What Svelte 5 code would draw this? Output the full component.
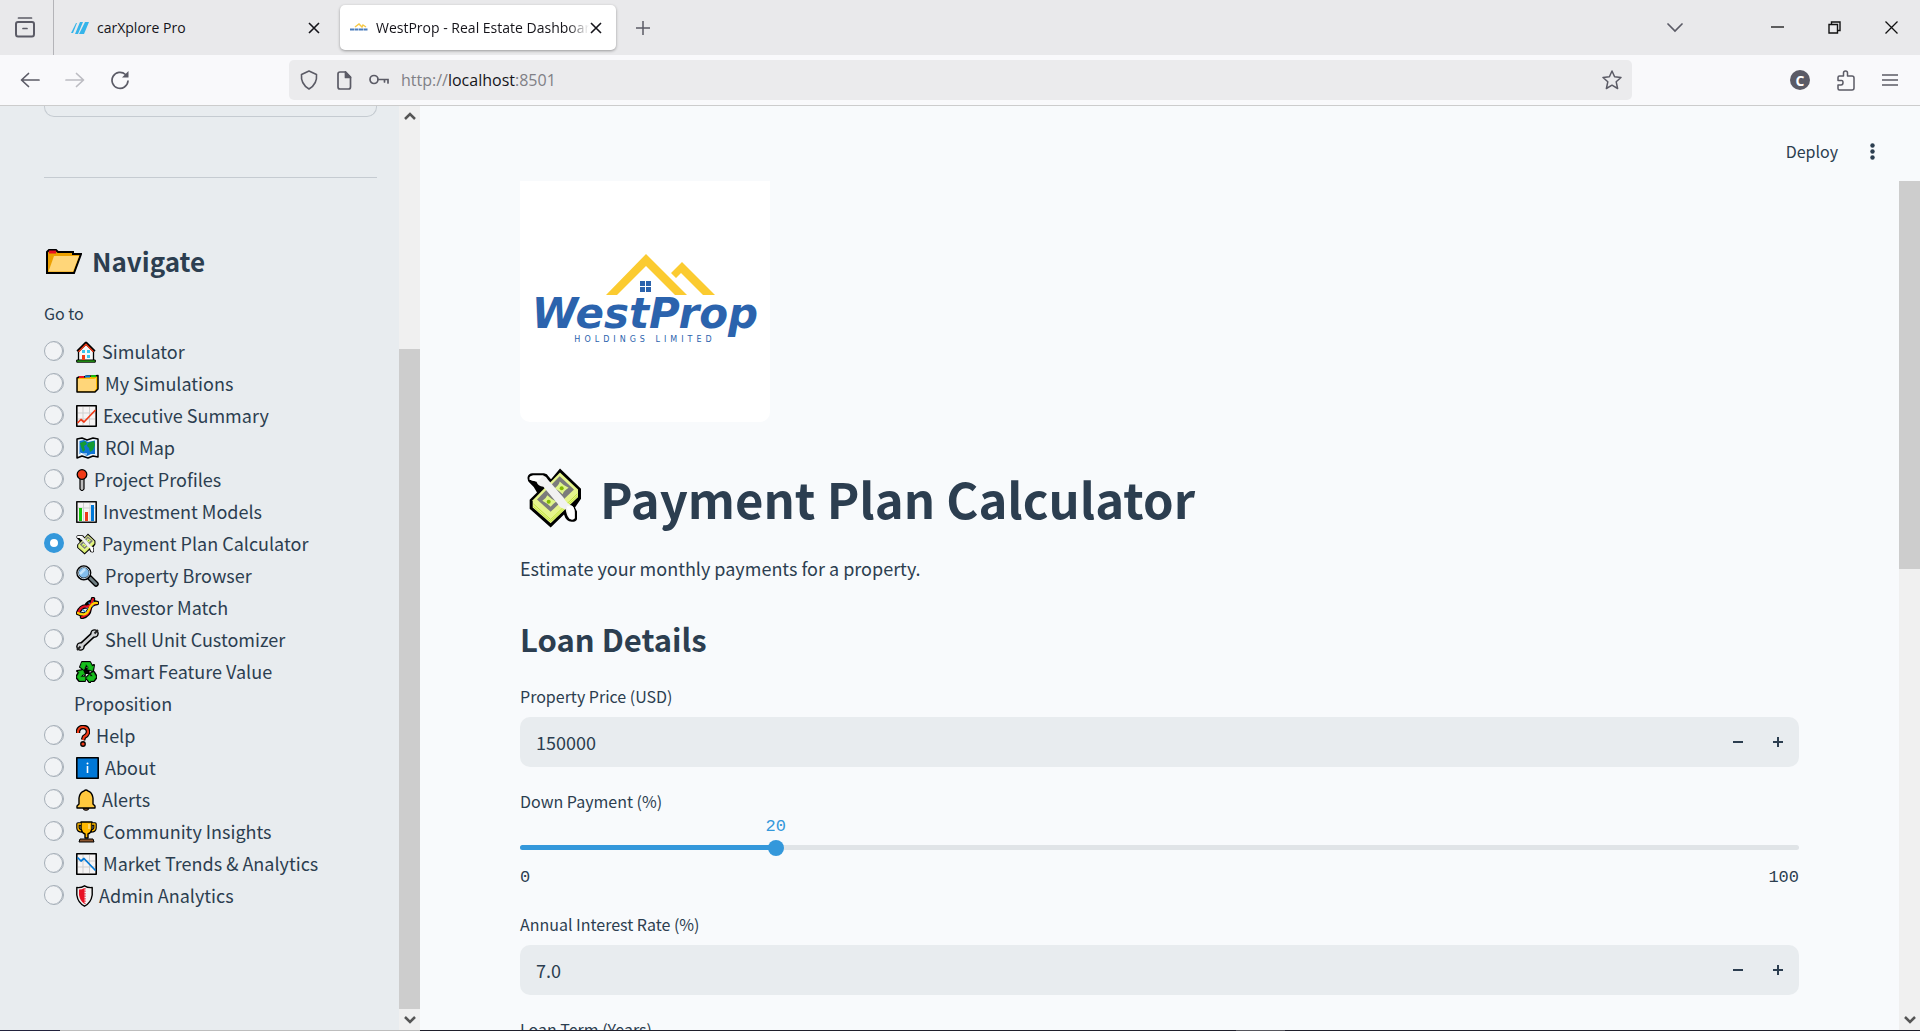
<script>
  const pages = [
    { id: 'house', w: 20, label: 'Simulator' },
    { id: 'dividers', w: 23, label: 'My Simulations' },
    { id: 'chartUp', w: 21, label: 'Executive Summary' },
    { id: 'map', w: 23, label: 'ROI Map' },
    { id: 'pin', w: 12, label: 'Project Profiles' },
    { id: 'bars', w: 21, label: 'Investment Models' },
    { id: 'money', w: 20, label: 'Payment Plan Calculator' },
    { id: 'search', w: 23, label: 'Property Browser' },
    { id: 'dna', w: 23, label: 'Investor Match' },
    { id: 'wrench', w: 23, label: 'Shell Unit Customizer' },
    { id: 'recycle', w: 21, label: 'Smart Feature Value Proposition' },
    { id: 'question', w: 14, label: 'Help' },
    { id: 'info', w: 23, label: 'About' },
    { id: 'bell', w: 20, label: 'Alerts' },
    { id: 'trophy', w: 21, label: 'Community Insights' },
    { id: 'chartDown', w: 21, label: 'Market Trends & Analytics' },
    { id: 'shield', w: 17, label: 'Admin Analytics' }
  ];
  let page = $state('money');
  let price = $state('150000');
  let rate = $state('7.0');
  let down = $state(20);
  const step = (value, by, digits) => (Number(value) + by).toFixed(digits);
</script>

{#snippet moneyArt()}
  <path d="M23 56Q26 45 37 45H72Q82 46 86 55L93 63L120 31L183 92V122L165 148L171 160V183Q167 192 155 191Q138 190 132 169L92 208L29 152V125L51 103Q43 85 28 73Q21 66 23 56Z" fill="#000" />
  <path d="M120 43L174 94V117L92 195L38 148V126Z" fill="#e6f58c" />
  <path d="M40 137L92 184L172 107M40 145L92 190L173 113" fill="none" stroke="#c3e43c" stroke-width="3" />
  <path d="M119 54L162 94L92 161L51 124Z" fill="#7c7c7c" />
  <path d="M119 70Q128 80 146 89Q132 97 128 108Q118 98 104 90Q118 80 119 70ZM82 111Q92 121 109 130Q99 137 92 146Q82 136 67 128Q78 121 82 111Z" fill="#dff58a" />
  <path d="M29 57Q32 52 40 52H70Q79 54 84 65L131 119Q139 136 156 143Q164 149 164 163V180Q158 187 148 181Q140 174 137 153Q120 151 113 137L70 86Q54 84 49 70Q40 69 29 65Z" fill="#f1f1f1" />
  <path d="M29 57Q32 52 40 52H70L58 65L49 70Q40 69 29 65ZM140 145L156 143Q164 149 164 163V180Q158 187 148 181Z" fill="#fff" />
  <circle cx="125" cy="90" r="6" fill="#82b900" /><circle cx="86" cy="131" r="6" fill="#82b900" />
{/snippet}

{#snippet emoji(id, w)}
  {#if id === 'money'}
    <svg class="emoji" width={w} height="22" viewBox="21 27 165 185" aria-hidden="true">{@render moneyArt()}</svg>
  {:else}
    <svg class="emoji" width={w} height="22" viewBox="0 0 {w} 22" stroke-linejoin="round" aria-hidden="true">
      {#if id === 'house'}
        <path d="M2.500 9V20H17.500V9L10 3Z" fill="#f7f7f7" stroke="#000" stroke-width="1.300" />
        <path d="M.7 19H19.300V21.200H.7Z" fill="#2cc11b" stroke="#000" />
        <path d="M1.500 10.500L10 2L18.500 10.500" fill="none" stroke="#000" stroke-width="3" />
        <path d="M2.500 10.800L10 3.300L17.500 10.800" fill="none" stroke="#f03a17" stroke-width="1.500" />
        <path d="M6 9h3v3H6zM11 9h3v3h-3zM11 14h3v3h-3z" fill="#37c5ee" /><path d="M6 14h3v5H6z" fill="#f03a17" />
      {:else if id === 'dividers'}
        <path d="M1 5L3 4H8L11 3H18L22 2.500V16L19 19H1Z" fill="#ffb900" stroke="#000" stroke-width="1.500" />
        <path d="M3 4H8" stroke="#e81123" stroke-width="2" /><path d="M9 3.500H14" stroke="#0078d7" stroke-width="2" /><path d="M15 3.200H20" stroke="#16c60c" stroke-width="2" />
        <path d="M2 6H18L20 5V16L18 18H2Z" fill="#ffd679" />
      {:else if id === 'chartUp' || id === 'chartDown'}
        <path d="M.8.800H20.200V21.200H.8Z" fill="#f6f4f4" stroke="#000" stroke-width="1.600" />
        <path d="M7 2V20M13.500 2V20M2 8H19M2 14H19" stroke="#cfcfcf" />
        {#if id === 'chartUp'}
          <path d="M1.500 18L5 14.500L8 17L19.500 5" fill="none" stroke="#f03a17" stroke-width="1.700" />
        {:else}
          <path d="M1.500 4.500L5 8L8 5.500L19.500 17.500" fill="none" stroke="#0078d7" stroke-width="1.700" />
        {/if}
      {:else if id === 'map'}
        <path d="M1 2L6 1L11 3L17 1L22 2V20L17 19L12 21L6 19L1 21Z" fill="#eaf3fa" stroke="#000" stroke-width="1.500" />
        <path d="M3.500 4L8 3L12 5L19 3.500V17L15 17L11 19L7 17L3.500 17Z" fill="#0f75d4" />
        <path d="M4 6L9 4L11 7L8 9L9 13L7 15L5 10ZM12 6L18 4L19 8L17 13L14 15L13 11L11 9Z" fill="#159b35" />
        <path d="M4 16L7 17L11 17" fill="none" stroke="#fff" />
      {:else if id === 'pin'}
        <path d="M4 9H8V20Q6 23 4 20Z" fill="#bdbdbd" stroke="#000" stroke-width="1.200" />
        <circle cx="6" cy="5.500" r="4.800" fill="#f03a17" stroke="#000" stroke-width="1.300" />
      {:else if id === 'bars'}
        <path d="M.8.800H20.200V21.200H.8Z" fill="#f6f4f4" stroke="#111" stroke-width="1.600" />
        <path d="M7.500 2V20M14 2V20M2 7H19" stroke="#cfcfcf" />
        <path d="M3 7h3v13H3z" fill="#16c60c" /><path d="M9 11h3v9H9z" fill="#f03a17" /><path d="M15 4h3v16h-3z" fill="#0078d7" />
      {:else if id === 'search'}
        <path d="M13 12L20 19" stroke="#000" stroke-width="5.500" stroke-linecap="round" />
        <path d="M14 13L20 19" stroke="#6f7e82" stroke-width="2.800" stroke-linecap="round" />
        <circle cx="7.800" cy="7.800" r="6.300" fill="#83beec" stroke="#000" stroke-width="2.600" /><circle cx="7.800" cy="7.800" r="5.800" fill="none" stroke="#c8d8e3" />
        <path d="M4 9L9 4" stroke="#c4e4fa" stroke-width="2.500" />
      {:else if id === 'dna'}
        <g fill="none" stroke-linecap="round">
          <path d="M2 16Q5 9 10 9.500T17 2M6 20Q13 18 13.500 12.500T21 6M2 16Q10 20 13.500 12.500M10 9.500Q13 3 21 6" stroke="#000" stroke-width="4.500" />
          <path d="M5 16L8 18M7 13L11 16M13 6L17 9M16 4L19 6M10 10L13 12" stroke="#2f8fe0" stroke-width="1.500" />
          <path d="M6 20Q13 18 13.500 12.500T21 6M2 16Q5 9 10 9.500T17 2" stroke="#e81123" stroke-width="2.200" />
          <path d="M2 16Q10 20 13 12.500T21 6" stroke="#ffd000" stroke-width="2.200" />
        </g>
      {:else if id === 'wrench'}
        <path d="M4.500 17.500L18.500 4.500" stroke="#000" stroke-width="6" /><circle cx="4.500" cy="17.500" r="4.300" fill="#000" /><circle cx="18.500" cy="4.500" r="4.300" fill="#000" />
        <path d="M4.500 17.500L18.500 4.500" stroke="#cfd1d3" stroke-width="3" /><circle cx="4.500" cy="17.500" r="2.900" fill="#cfd1d3" /><circle cx="18.500" cy="4.500" r="2.900" fill="#cfd1d3" />
        <path d="M1 21L4.500 17.500M18.500 4.500L22 1" stroke="#222" stroke-width="1.800" />
      {:else if id === 'recycle'}
        <path d="M6 1H14L16 5L18 4L17 10L11 8L13 7L11 4L8 9L4 6ZM18 11L21 16L18 20H14V22L10 17L14 13V15H17L15 12ZM1 10L7 9L9 14L7 13L5 16H9V20H3L0 16L3 11Z" fill="#000" stroke="#000" stroke-width="2" />
        <path d="M8 7L13 7L14 13L7 13Z" fill="#000" />
        <path d="M6 1.500H14L16 5.500L17.500 5L16.500 9.500L11.500 8L13 7L10 3L8 8.500L4.500 6ZM17.500 11.500L20 16L17.500 19.500H14V21L10.500 17L14 13.500V15.500H17L15 12.500ZM2 10.500L7 9.500L8.500 13.500L7 13L4 16H9V19.500H3.500L1 16L3.500 11.500Z" fill="#16c01c" stroke="#16b01c" stroke-width=".8" />
      {:else if id === 'question'}
        <path d="M2 8V6Q3 2 7 2Q12 2 12 7Q12 10 8 12L7 15" fill="none" stroke="#000" stroke-width="4.500" /><circle cx="7" cy="19" r="2.900" fill="#000" />
        <path d="M2 8V6Q3 2 7 2Q12 2 12 7Q12 10 8 12L7 15" fill="none" stroke="#f03a17" stroke-width="2.200" /><circle cx="7" cy="19" r="1.600" fill="#f03a17" />
      {:else if id === 'info'}
        <path d="M.8.800H22.200V21.200H.8Z" fill="#0078d7" stroke="#000" stroke-width="1.600" />
        <path d="M11.500 9V16" stroke="#fff" stroke-width="1.600" /><circle cx="11.500" cy="6.500" r="1" fill="#fff" />
      {:else if id === 'bell'}
        <path d="M7 19H13Q13 21.300 10 21.300T7 19Z" fill="#8e562e" stroke="#000" />
        <path d="M1 19V17L3 15V9Q4 3 8 2Q10 0 12 2Q16 3 17 9V15L19 17V19Z" fill="#ffc83d" stroke="#000" stroke-width="1.400" />
      {:else if id === 'trophy'}
        <path d="M5 3H2V7Q2 10 6 10M16 3H19V7Q19 10 15 10" fill="none" stroke="#000" stroke-width="3.600" />
        <path d="M5 1H16V8Q15 12 12 13V17H9V13Q6 12 5 8Z" fill="#ffb900" stroke="#000" stroke-width="1.400" />
        <path d="M5 3H2V7Q2 9 5 10M16 3H19V7Q19 9 16 10" fill="none" stroke="#ffb900" stroke-width="1.300" />
        <path d="M4 18H17L18 21H3Z" fill="#8e562e" stroke="#000" /><path d="M13 3V8" stroke="#ffe08a" stroke-width="1.500" />
      {:else}
        <path d="M8.500.800Q12 3 16.200 2.500V10Q15 18 8.500 21.200Q2 18 .8 10V2.500Q5 3 8.500.800Z" fill="#f2f2f2" stroke="#000" stroke-width="1.400" />
        <path d="M8.500 3Q6 4.500 3 4.500V10Q4 16 8.500 19Z" fill="#e81123" /><path d="M9 3V19" stroke="#e81123" stroke-dasharray="1.500 1" />
      {/if}
    </svg>
  {/if}
{/snippet}

{#snippet arrow(up)}
  <button class="arrow" aria-label={up ? 'Scroll up' : 'Scroll down'}>
    <svg width="12" height="10" viewBox="0 0 12 10" fill="none" stroke="#555" stroke-width="2.500">
      <path d={up ? 'M1 7L6 2L11 7' : 'M1 2L6 7L11 2'} />
    </svg>
  </button>
{/snippet}

{#snippet steppers(lower, raise)}
  <button aria-label="Decrease" onclick={lower}><svg width="10" height="10" viewBox="0 0 10 10"><path d="M0 5H10" stroke="#2c3e50" stroke-width="2" /></svg></button>
  <button aria-label="Increase" onclick={raise}><svg width="10" height="10" viewBox="0 0 10 10"><path d="M0 5H10M5 0V10" stroke="#2c3e50" stroke-width="2" /></svg></button>
{/snippet}

<div class="window">
  <header class="tabs">
    <button class="recent" aria-label="Recent browsing">
      <svg width="20" height="21" viewBox="0 0 20 21" fill="none" stroke="#5b5b66" stroke-width="1.700" stroke-linecap="round" stroke-linejoin="round">
        <path d="M3.500 1H16.500" /><path d="M3 5H17Q19 5 19 7V17Q19 19.500 17 19.500H3Q1 19.500 1 17V7Q1 5 3 5Z" stroke-width="2" /><path d="M8 11.500H12" />
      </svg>
    </button>
    <div class="tab">
      <svg class="fav" width="18" height="12" viewBox="0 0 18 12" fill="#35b4ea"><path d="M5 1H6L2 11H0ZM9 0H12L7 12H4ZM14 0H18L13 12H8Z" /></svg>
      <span>carXplore Pro</span>
      <button aria-label="Close tab"><svg width="12" height="12" viewBox="0 0 12 12"><path d="M1 1L11 11M11 1L1 11" stroke="#15141a" stroke-width="1.600" /></svg></button>
    </div>
    <div class="tab active">
      <svg class="fav" width="18" height="9" viewBox="0 0 18 9" fill="none"><path d="M5 4L9 1L12 4L13 2L16 4" stroke="#f6c844" stroke-width="1.400" /><path d="M0 6.500H18" stroke="#4a7dbd" stroke-width="2" stroke-dasharray="4 .500" /></svg>
      <span>WestProp - Real Estate Dashboard</span>
      <button aria-label="Close tab"><svg width="12" height="12" viewBox="0 0 12 12"><path d="M1 1L11 11M11 1L1 11" stroke="#15141a" stroke-width="1.600" /></svg></button>
    </div>
    <button class="plus" aria-label="New tab"><svg width="16" height="16" viewBox="0 0 16 16"><path d="M1 8H15M8 1V15" stroke="#5b5b66" stroke-width="1.500" /></svg></button>
    <div class="winctl">
      <button aria-label="List all tabs"><svg width="16" height="10" viewBox="0 0 16 10" fill="none"><path d="M1 1L8 8L15 1" stroke="#5b5b66" stroke-width="1.700" stroke-linecap="round" /></svg></button>
      <button aria-label="Minimize"><svg width="13" height="13" viewBox="0 0 13 13"><path d="M0 6H13" stroke="#111" stroke-width="1.300" /></svg></button>
      <button aria-label="Restore"><svg width="13" height="13" viewBox="0 0 13 13" fill="none" stroke="#111" stroke-width="1.400"><path d="M1 3.500H9.500V12H1ZM3.500 3V1H12V9.500H10" /></svg></button>
      <button aria-label="Close"><svg width="13" height="13" viewBox="0 0 13 13"><path d="M.500.500L12.500 12.500M12.500.500L.5 12.500" stroke="#111" stroke-width="1.300" /></svg></button>
    </div>
  </header>

  <nav class="toolbar">
    <div class="history">
      <button aria-label="Back"><svg width="20" height="16" viewBox="0 0 20 16" fill="none" stroke="#5b5b66" stroke-width="1.700" stroke-linecap="round" stroke-linejoin="round"><path d="M19 8H2M8.500 1.500L1.500 8L8.500 14.500" /></svg></button>
      <button aria-label="Forward"><svg width="20" height="16" viewBox="0 0 20 16" fill="none" stroke="#bcbcc2" stroke-width="1.700" stroke-linecap="round" stroke-linejoin="round"><path d="M1 8H18M11.500 1.500L18.500 8L11.500 14.500" /></svg></button>
      <button aria-label="Reload"><svg width="20" height="20" viewBox="0 0 20 20" fill="none"><path d="M18 11A8 8 0 1 1 15.500 4.500" stroke="#5b5b66" stroke-width="1.700" stroke-linecap="round" /><path d="M18.500 1V7.500H12Z" fill="#5b5b66" /></svg></button>
    </div>
    <div class="address">
      <svg width="20" height="20" viewBox="0 0 20 20" fill="none" stroke="#5b5b66" stroke-width="1.600" stroke-linejoin="round"><path d="M10 1L17.500 4.500Q18.500 14 10 19Q1.500 14 2.500 4.500Z" /></svg>
      <svg width="16" height="19" viewBox="0 0 16 19" fill="none" stroke="#5b5b66" stroke-width="1.700" stroke-linejoin="round"><path d="M4 1H9.500L14.500 6V16Q14.500 18 12.500 18H4Q2 18 2 16V3Q2 1 4 1Z" /><path d="M9.500 1V6.500H14.500Z" fill="#5b5b66" /></svg>
      <svg width="20" height="12" viewBox="0 0 20 12" fill="none" stroke="#5b5b66" stroke-width="1.700" stroke-linecap="round"><circle cx="5" cy="5.500" r="4" /><path d="M9 5.500H19V9M15.500 5.500V8" /></svg>
      <a href="http://localhost:8501">http://<b>localhost</b>:8501</a>
      <button aria-label="Bookmark this page"><svg width="20" height="20" viewBox="0 0 20 20" fill="none" stroke="#5b5b66" stroke-width="1.500" stroke-linejoin="round"><path d="M10 1L12.600 6.800L19 7.500L14.200 11.800L15.600 18.500L10 15.200L4.400 18.500L5.800 11.800L1 7.500L7.400 6.800Z" /></svg></button>
    </div>
    <div class="extras">
      <button class="account" aria-label="Account">C</button>
      <button aria-label="Extensions"><svg width="18" height="21" viewBox="0 0 18 21" fill="none" stroke="#5b5b66" stroke-width="1.500" stroke-linejoin="round"><path d="M2.500 6H6.500V3Q6.500 1 8.500 1T10.500 3V6H15Q17 6 17 8V18Q17 20 15 20H2.500Q1 20 1 18.500V15H4Q6 15 6 12.500T4 10.500H1V7.500Q1 6 2.500 6Z" /></svg></button>
      <button aria-label="Menu"><svg width="16" height="12" viewBox="0 0 16 12"><path d="M0 1H16M0 6H16M0 11H16" stroke="#5b5b66" stroke-width="1.400" /></svg></button>
    </div>
  </nav>

  <div class="page">
    <aside>
      <div class="side-body">
        <div class="cut-box"></div>
        <hr />
        <h2 class="nav-title">
          <svg width="36" height="25" viewBox="0 0 36 25" aria-hidden="true"><path d="M1 24V3L3 1H10L12 3H27V5H35L28 24Z" fill="#eca000" stroke="#000" stroke-width="2" /><path d="M3 3H10" stroke="#e81123" stroke-width="3" /><path d="M8 7H33L27 22.500H2.500Z" fill="#ffd679" /></svg>
          Navigate
        </h2>
        <fieldset>
          <legend>Go to</legend>
          {#each pages as p}
            <label class="option"><input type="radio" name="page" value={p.id} bind:group={page} /><span>{@render emoji(p.id, p.w)} {p.label}</span></label>
          {/each}
        </fieldset>
      </div>
      <div class="bar side-bar">
        {@render arrow(true)}
        <div class="space"></div>
        <div class="thumb"></div>
        {@render arrow(false)}
      </div>
    </aside>

    <div class="content">
      <div class="app-head">
        <button>Deploy</button>
        <button aria-label="More options"><svg width="5" height="17" viewBox="0 0 5 17" fill="#2c3e50"><circle cx="2.500" cy="2.500" r="2.200" /><circle cx="2.500" cy="8.500" r="2.200" /><circle cx="2.500" cy="14.500" r="2.200" /></svg></button>
      </div>
      <div class="scroller">
        <main>
          <svg class="logo" width="250" height="241" viewBox="0 0 250 241" role="img" aria-label="WestProp Holdings Limited">
            <path d="M86 114L126 73L167 114H155L126 85L97 114Z M151 92L162 81L195 114H183L161 92L156 97Z" fill="#fbcb30" />
            <path d="M120 100h5v5h-5zM126 100h5v5h-5zM120 106h5v5h-5zM126 106h5v5h-5z" fill="#2b63ad" />
            <text x="125" y="147" text-anchor="middle" class="mark">WestProp</text>
            <text x="125" y="161" text-anchor="middle" class="submark">HOLDINGS LIMITED</text>
          </svg>
          <h1><svg width="55" height="62" viewBox="21 27 165 185" aria-hidden="true">{@render moneyArt()}</svg>Payment Plan Calculator</h1>
          <p>Estimate your monthly payments for a property.</p>
          <h2>Loan Details</h2>

          <div class="field">
            <label for="price">Property Price (USD)</label>
            <div class="number">
              <input id="price" type="text" inputmode="numeric" bind:value={price} />
              {@render steppers(() => (price = step(price, -1000, 0)), () => (price = step(price, 1000, 0)))}
            </div>
          </div>

          <div class="field">
            <label for="down">Down Payment (%)</label>
            <div class="slider">
              <output for="down" style="left: {down}%">{down}</output>
              <div class="rail"><div class="fill" style="width: {down}%"></div></div>
              <input id="down" type="range" min="0" max="100" bind:value={down} />
              <div class="ticks"><span>0</span><span>100</span></div>
            </div>
          </div>

          <div class="field">
            <label for="rate">Annual Interest Rate (%)</label>
            <div class="number">
              <input id="rate" type="text" inputmode="decimal" bind:value={rate} />
              {@render steppers(() => (rate = step(rate, -0.1, 1)), () => (rate = step(rate, 0.1, 1)))}
            </div>
          </div>

          <div class="field">
            <label for="term">Loan Term (Years)</label>
            <div class="number"><input id="term" type="text" /></div>
          </div>
        </main>
        <div class="bar main-bar">
          <div class="thumb"></div>
          <div class="space"></div>
          {@render arrow(false)}
        </div>
      </div>
    </div>
  </div>
  <div class="edge"></div>
</div>

<style>
  :global(body) { margin: 0; }
  .window { height: 100vh; display: flex; flex-direction: column; overflow: hidden; color: #2c3e50; background: #f8fafc; font-family: "Noto Sans CJK SC", "Noto Sans", sans-serif; }
  button { border: 0; padding: 0; background: none; font: inherit; color: inherit; display: flex; align-items: center; justify-content: center; }
  svg { flex: none; display: block; }
  h1, h2, p { margin: 0; }

  .tabs { flex: none; height: 55px; display: flex; align-items: center; background: #e9e9eb; color: #15141a; font: 14px "Open Sans", sans-serif; }
  .recent { box-sizing: border-box; width: 54px; height: 55px; padding-right: 3px; border-right: 1px solid #b4b4b8; }
  .tab { box-sizing: border-box; width: 276px; height: 45px; margin-left: 7px; padding: 0 13px 0 10px; display: flex; align-items: center; border-radius: 5px; }
  .tab:not(.active) { padding-right: 16px; }
  .tab.active { margin-left: 3px; background: #fff; box-shadow: 0 1px 3px rgba(0, 0, 0, .35); }
  .tab span { flex: 1; margin-left: 8px; white-space: nowrap; overflow: hidden; }
  .tab.active span { mask-image: linear-gradient(to right, #000 90%, transparent); }
  .tab button { width: 14px; height: 20px; }
  .plus { margin-left: 19px; width: 16px; }
  .winctl { margin-left: auto; display: flex; align-items: center; }
  .winctl button { width: 57px; height: 55px; }
  .winctl button:first-child { margin-right: 46px; }

  .toolbar { flex: none; box-sizing: border-box; height: 51px; display: flex; align-items: center; background: #f9f9fb; border-bottom: 1px solid #ccc; }
  .history { box-sizing: border-box; width: 289px; padding-left: 20px; display: flex; gap: 25px; }
  .history button { width: 20px; height: 30px; }
  .address { flex: 1; box-sizing: border-box; height: 40px; padding: 0 10px; display: flex; align-items: center; gap: 17px; border-radius: 5px; background: #ebebed; }
  .address a { flex: 1; margin-left: -5px; color: #808086; text-decoration: none; font: 16px "Open Sans", sans-serif; }
  .address b { font-weight: 400; color: #15141a; }
  .extras { box-sizing: border-box; width: 288px; padding-right: 22px; display: flex; align-items: center; justify-content: flex-end; gap: 27px; }
  .account { width: 20px; height: 20px; border-radius: 50%; background: #5b5b66; color: #fff; font: bold 14px "Open Sans", sans-serif; }

  .page { flex: 1; min-height: 0; display: flex; }
  aside { flex: none; width: 420px; display: flex; background: #e8ecef; }
  .side-body { flex: 1; min-width: 0; padding: 0 22px 0 44px; overflow: hidden; }
  .cut-box { height: 10px; border: 1px solid #c5cbd1; border-top: 0; border-radius: 0 0 10px 10px; }
  hr { margin: 60px 0 65px; border: 0; border-top: 1px solid #c5cbd1; }
  .nav-title { display: flex; align-items: center; gap: 10px; padding-left: 2px; font-size: 26px; line-height: 36px; font-weight: 700; }
  fieldset { border: 0; margin: 20px 0 0; padding: 0; min-width: 0; }
  legend { padding: 0; margin-bottom: 8px; font-size: 16px; line-height: 28px; }
  .option { display: flex; gap: 10px; font-size: 18px; line-height: 32px; }
  .option span { flex: 1; padding-right: 40px; }
  .option input { flex: none; appearance: none; width: 20px; height: 20px; margin: 6px 0 0; border-radius: 50%; border: 1px solid #a5aeb7; background: #f1f3f5; box-shadow: inset -1px 0 0 #a5aeb7; }
  .option input:checked { border: 6px solid #3498db; background: #fff; box-shadow: none; }
  .emoji { display: inline-block; vertical-align: -4px; margin: 0 2px; }

  .bar { flex: none; width: 21px; display: flex; flex-direction: column; background: #f0f0f0; }
  .arrow { flex: none; width: 21px; height: 21px; }
  .thumb { background: #cdcdcd; }
  .side-bar .space { flex: 222; }
  .side-bar .thumb { flex: 660; }
  .main-bar .thumb { flex: 388; }
  .main-bar .space { flex: 440; }

  .content { flex: 1; min-width: 0; display: flex; flex-direction: column; }
  .app-head { flex: none; height: 75px; box-sizing: border-box; padding: 30px 45px 0 0; display: flex; align-items: flex-start; justify-content: flex-end; gap: 32px; font-size: 16px; line-height: 30px; }
  .app-head button { height: 30px; }
  .scroller { flex: 1; min-height: 0; display: flex; }
  main { flex: 1; min-width: 0; padding: 0 100px; overflow: hidden; }
  .logo { background: #fff; border-radius: 0 0 10px 10px; }
  .mark { font: italic bold 42px "DejaVu Sans", sans-serif; fill: #2b63ad; }
  .submark { font: 8px "DejaVu Sans", sans-serif; letter-spacing: 4px; fill: #2b63ad; }
  h1 { display: flex; align-items: center; gap: 18px; margin-top: 43px; padding-left: 7px; font-size: 49px; line-height: 66px; font-weight: 700; }
  p { margin-top: 21px; font-size: 18px; line-height: 32px; }
  main h2 { margin: 34px 0 22px; font-size: 31px; line-height: 42px; font-weight: 700; }
  .field { margin-bottom: 20px; }
  .field label { display: block; margin-bottom: 7px; font-size: 16px; line-height: 28px; }
  .number { height: 50px; box-sizing: border-box; padding-right: 1px; display: flex; align-items: center; border-radius: 10px; background: #e8ecef; }
  .number input { flex: 1; min-width: 0; padding: 0 16px; border: 0; background: none; font: inherit; font-size: 18px; color: inherit; }
  .number button { width: 40px; height: 50px; }
  .slider { position: relative; height: 68px; font: 17px "Liberation Mono", monospace; display: grid; grid-template-rows: 23px 5px 40px; }
  .slider output { position: absolute; top: -5px; transform: translateX(-50%); line-height: 20px; color: #3498db; }
  .rail { grid-area: 2 / 1; height: 5px; border-radius: 3px; background: #e0e4e7; overflow: hidden; }
  .fill { height: 100%; background: #3498db; }
  .slider input { grid-area: 2 / 1; align-self: center; appearance: none; height: 16px; width: calc(100% + 16px); margin: 0 -8px; background: none; }
  .slider input::-webkit-slider-thumb { appearance: none; width: 16px; height: 16px; border-radius: 50%; background: #3498db; }
  .ticks { grid-area: 3 / 1; display: flex; justify-content: space-between; padding-top: 18px; line-height: 20px; }
  .edge { flex: none; height: 1px; background: linear-gradient(to right, #22223c 60px, #bdbdbd 60px 420px, #1f1f2b 420px 1236px, #55555c 1236px 1285px, #1f1f2b 1285px); }
</style>
